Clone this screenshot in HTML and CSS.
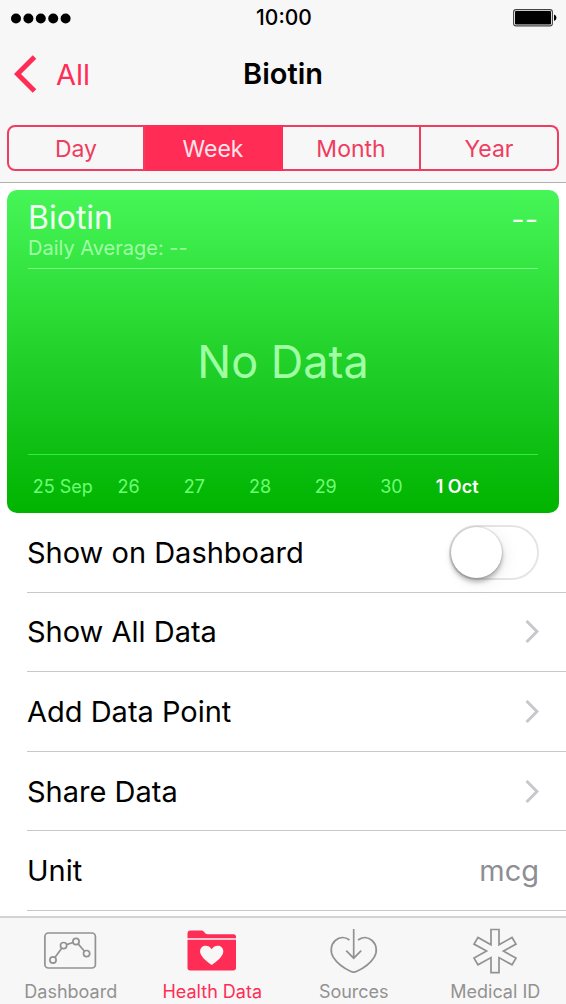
FILE: index.html
```html
<!DOCTYPE html>
<html lang="en">
<head>
<meta charset="utf-8">
<meta name="viewport" content="width=device-width, initial-scale=1">
<title>Biotin</title>
<link rel="stylesheet" href="styles.css">
</head>
<body>
<header class="top">
  <div class="status">
    <svg class="signal" width="60" height="11" viewBox="0 0 60 11" aria-hidden="true"><circle cx="5" cy="5.5" r="5"/><circle cx="17.4" cy="5.5" r="5"/><circle cx="29.8" cy="5.5" r="5"/><circle cx="42.2" cy="5.5" r="5"/><circle cx="54.6" cy="5.5" r="5"/></svg>
    <span class="clock">10:00</span>
    <svg class="battery" width="44" height="18" viewBox="0 0 44 18" aria-hidden="true"><rect x=".6" y=".6" width="38.8" height="16.3" rx="2.5" fill="none" stroke="#444" stroke-width="1.1"/><rect x="2" y="2" width="36" height="13.5" rx="1"/><path d="M41 5.5q2.5 1 2.5 3.2T41 12z"/></svg>
  </div>
  <nav class="nav">
    <a class="back" href="#"><svg width="24" height="38" viewBox="0 0 24 38" aria-hidden="true"><path d="M20.5 2 3.5 19l17 17" fill="none" stroke="#ff2d55" stroke-width="5"/></svg>All</a>
    <h1 class="title">Biotin</h1>
  </nav>
  <div class="segments">
    <button class="segment" type="button">Day</button>
    <button class="segment selected" type="button">Week</button>
    <button class="segment" type="button">Month</button>
    <button class="segment" type="button">Year</button>
  </div>
</header>
<main class="content">
  <section class="card">
    <div class="card-head">
      <div>
        <h2 class="card-title">Biotin</h2>
        <p class="average">Daily Average: --</p>
      </div>
      <span class="card-value">--</span>
    </div>
    <p class="empty">No Data</p>
    <div class="dates"><span>25 Sep</span><span>26</span><span>27</span><span>28</span><span>29</span><span>30</span><span class="today">1 Oct</span></div>
  </section>
  <div class="list">
    <div class="row"><label for="dash">Show on Dashboard</label><input class="switch" id="dash" type="checkbox" role="switch"></div>
    <a class="row" href="#">Show All Data<svg class="chevron" viewBox="0 0 14 23" aria-hidden="true"><path d="m1.5 1 10.5 10.5L1.5 22"/></svg></a>
    <a class="row" href="#">Add Data Point<svg class="chevron" viewBox="0 0 14 23" aria-hidden="true"><path d="m1.5 1 10.5 10.5L1.5 22"/></svg></a>
    <a class="row" href="#">Share Data<svg class="chevron" viewBox="0 0 14 23" aria-hidden="true"><path d="m1.5 1 10.5 10.5L1.5 22"/></svg></a>
    <div class="row"><span>Unit</span><span class="unit">mcg</span></div>
  </div>
</main>
<nav class="tabs">
  <a class="tab" href="#"><svg class="tab-icon" viewBox="1 0 54 46" aria-hidden="true"><rect x="1.9" y="5" width="50.5" height="35" rx="3.5"/><circle cx="10" cy="32" r="3.1"/><circle cx="20.6" cy="17.6" r="3.1"/><circle cx="33" cy="13.5" r="3.1"/><circle cx="43.6" cy="25.6" r="3.1"/><path d="m11.9 29.4 6.8-9.2M23.6 16.6l6.4-2.1M35.1 15.9l6.4 7.3"/></svg>Dashboard</a>
  <a class="tab active" href="#"><svg class="tab-icon solid" viewBox="0 0 54 46" aria-hidden="true"><path d="M2.5 10.2V5.5q0-3 3-3H16q2 0 3 1.3l1.2 1.4q1 1 2.8 1h25.5q2.5 0 2.5 2.5v1.5z"/><path fill-rule="evenodd" d="M2.5 11.8H51v28q0 2.7-2.7 2.7H5.2q-2.7 0-2.7-2.7zM26.7 37C32 33.2 38.3 28.5 38.3 23.3c0-6.3-8.3-7.6-11.6-2-3.3-5.6-11.6-4.3-11.6 2C15.1 28.5 21.4 33.2 26.7 37z"/></svg>Health Data</a>
  <a class="tab" href="#"><svg class="tab-icon" viewBox="0 0 54 46" aria-hidden="true"><path d="M22.5 12C18 8.5 12.5 8.8 8.3 12.5 3.7 16.6 2.9 24 6.3 29.3 10.5 36 17.5 40.5 23.5 43.3q3.2 1.5 6.4 0C36 40.5 43 36 47.2 29.3 50.6 24 49.7 16.6 45.1 12.5 41 8.8 35.5 8.500 31 12M26.700 1v29.500M19.200 22.700l7.500 7.500 7.500-7.500"/></svg>Sources</a>
  <a class="tab" href="#"><svg class="tab-icon" viewBox="0 0 54 46" aria-hidden="true"><path d="M23 1.5h8v15.2L44 9.5l4 6.6-12.6 7 12.6 7-4 6.7-13-7.2v15.1h-8V29.6l-13 7.2-4-6.7 12.6-7-12.6-7 4-6.6 13 7.2z"/></svg>Medical ID</a>
</nav>
</body>
</html>
```
FILE: styles.css
```css
* { box-sizing: border-box; }

body {
  margin: 0;
  min-height: 100vh;
  display: flex;
  flex-direction: column;
  background: #fff;
  color: #000;
  font-family: Inter, "Liberation Sans", sans-serif;
}

a { color: inherit; text-decoration: none; }
h1, h2, p { margin: 0; }

.top {
  background: #f7f7f7;
  border-bottom: 1px solid #b2b2b2;
  padding-bottom: 11px;
}

.status {
  display: grid;
  grid-template-columns: 1fr auto 1fr;
  align-items: center;
  height: 36px;
  padding: 0 9px 0 11px;
}

.clock { font-size: 21px; font-weight: 500; line-height: 24px; }
.battery { justify-self: end; }

.nav {
  display: grid;
  grid-template-columns: 1fr auto 1fr;
  align-items: center;
  height: 76px;
  padding: 0 14px;
}

.back {
  display: flex;
  align-items: center;
  gap: 18px;
  color: #ff2d55;
  font-size: 29px;
}

.title { font-size: 29px; font-weight: 600; line-height: 36px; }

.segments {
  display: grid;
  grid-template-columns: repeat(4, 1fr);
  height: 46px;
  margin: 13px 7px 0;
}

.segment {
  border: 2px solid #ee3d60;
  border-left-width: 0;
  background: none;
  color: #ee3d60;
  font: inherit;
  font-size: 23px;
  padding: 2px 0 0;
}

.segment:first-child { border-left-width: 2px; border-radius: 8px 0 0 8px; }
.segment:last-child { border-radius: 0 8px 8px 0; }
.segment.selected { background: #ff2d55; border-color: #ff2d55; color: #ffe3ea; }

.content { flex: 1; display: flex; flex-direction: column; }

.card {
  display: flex;
  flex-direction: column;
  height: 323px;
  margin: 7px 7px 0;
  border-radius: 10px;
  background: linear-gradient(#46f658, #2bdc35 38%, #1ccb24 60%, #00b400);
  color: #a0ffa5;
}

.card-head {
  display: flex;
  justify-content: space-between;
  margin: 0 21px;
  padding: 8px 0;
  height: 79px;
  border-bottom: 1px solid #7cf985;
}

.card-title, .card-value {
  color: #f0fff1;
  font-size: 32px;
  font-weight: 400;
  line-height: 40px;
}

.card-value { font-size: 29px; line-height: 44px; }

.average { font-size: 20px; line-height: 20px; }

.empty {
  flex: 1;
  display: grid;
  place-items: center;
  font-size: 45px;
}

.dates {
  display: grid;
  grid-template-columns: repeat(7, 1fr);
  align-items: center;
  height: 59px;
  margin: 0 21px;
  padding: 5px 48px 0 2px;
  border-top: 1px solid #2fee38;
  color: #6dff74;
  font-size: 18px;
  text-align: center;
}

.today { color: #fff; font-weight: 600; }

.list {
  flex: 1;
  display: grid;
  grid-auto-rows: 1fr;
  padding: 0 0 5px 27px;
}

.row {
  display: flex;
  align-items: center;
  justify-content: space-between;
  min-height: 79px;
  padding-right: 27px;
  border-bottom: 1px solid #c8c7cc;
  font-size: 29px;
}

.unit { color: #8e8e93; }

.chevron {
  width: 14px;
  height: 23px;
  fill: none;
  stroke: #c7c7cc;
  stroke-width: 3;
}

.switch {
  appearance: none;
  display: flex;
  width: 90px;
  height: 55px;
  margin: 0;
  border: 2px solid #e5e5e5;
  border-radius: 28px;
}

.switch::before {
  content: "";
  width: 51px;
  height: 51px;
  border-radius: 50%;
  background: #fff;
  box-shadow: 0 4px 5px rgba(0, 0, 0, .28), 0 0 2px rgba(0, 0, 0, .3), 4px 4px 16px rgba(0, 0, 0, .07);
}

.switch:checked { background: #4cd964; justify-content: flex-end; }

.tabs {
  display: grid;
  grid-template-columns: repeat(4, 1fr);
  height: 88px;
  border-top: 2px solid #d3d3d3;
  background: #f7f7f7;
}

.tab {
  display: flex;
  flex-direction: column;
  align-items: center;
  padding-top: 10px;
  color: #929292;
  font-size: 18px;
  line-height: 36px;
}

.tab.active { color: #ff2d55; }

.tab-icon {
  width: 54px;
  height: 46px;
  flex: none;
  fill: none;
  stroke: currentColor;
  stroke-width: 1.7;
}

.tab-icon.solid { fill: currentColor; stroke: none; }
```
